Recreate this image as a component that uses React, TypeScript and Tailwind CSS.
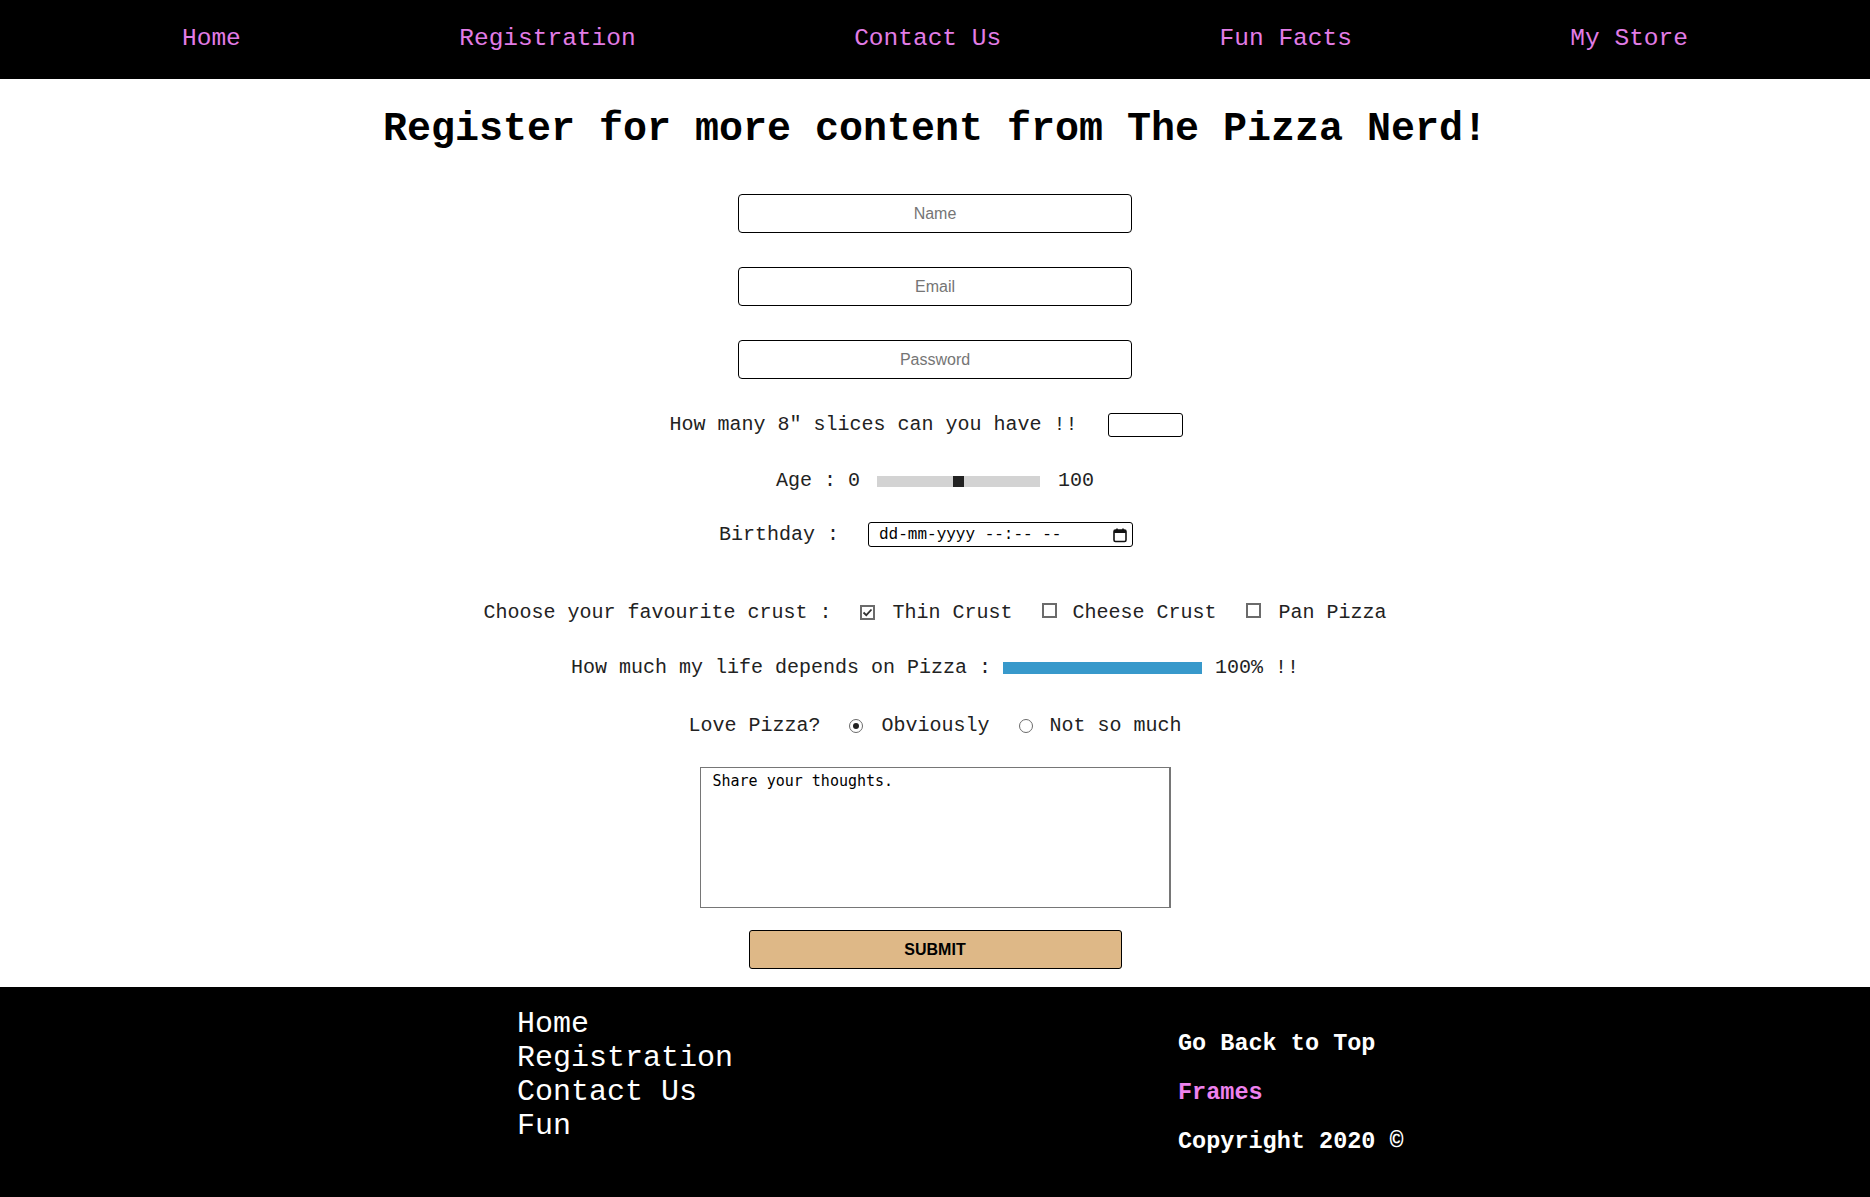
const mono = "font-['Liberation_Mono','Courier_New',monospace]";

const navLinks = ['Home', 'Registration', 'Contact Us', 'Fun Facts', 'My Store'];
const footerLinks = ['Home', 'Registration', 'Contact Us', 'Fun'];

function CheckBox({ checked }: { checked?: boolean }) {
  return (
    <span className="inline-flex h-[15px] w-[15px] items-center justify-center border-2 border-[#6b6b6b] bg-white">
      {checked && (
        <svg width="11" height="11" viewBox="0 0 11 11" fill="none">
          <path d="M1.5 5.5 L4.3 8.2 L9.5 2.5" stroke="#333" strokeWidth="1.8" />
        </svg>
      )}
    </span>
  );
}

function Radio({ checked }: { checked?: boolean }) {
  return (
    <span className="inline-flex h-[14px] w-[14px] items-center justify-center rounded-full border border-[#6b6b6b] bg-white">
      {checked && <span className="h-[6px] w-[6px] rounded-full bg-[#222]" />}
    </span>
  );
}

function TextField({ placeholder, type = 'text' }: { placeholder: string; type?: string }) {
  return (
    <input
      type={type}
      placeholder={placeholder}
      className="h-[39px] w-[394px] rounded-[4px] border border-black bg-white text-center font-['Liberation_Sans',Arial,sans-serif] text-[16px] text-black placeholder:text-[#757575] outline-none"
    />
  );
}

export default function App() {
  return (
    <div className={`min-h-[1197px] w-full bg-white ${mono}`}>
      <nav className="flex h-[79px] items-center justify-between bg-black px-[182px]">
        {navLinks.map((link) => (
          <a key={link} href="#" className="text-[24.5px] leading-none text-[#e27ce6]">
            {link}
          </a>
        ))}
      </nav>

      <main className="flex flex-col items-center text-[20px] text-[#222]">
        <h1 className="mt-[27px] text-[40px] font-bold leading-[48px] text-black">
          Register for more content from The Pizza Nerd!
        </h1>

        <div className="mt-[40px] flex flex-col items-center gap-[34px]">
          <TextField placeholder="Name" />
          <TextField placeholder="Email" type="email" />
          <TextField placeholder="Password" type="password" />
        </div>

        <div className="mt-[34px] flex h-[24px] items-center gap-[30px] pr-[18px]">
          <span>How many 8" slices can you have !!</span>
          <input type="number" className="h-[24px] w-[75px] rounded-[3px] border border-black outline-none" />
        </div>

        <div className="mt-[32px] flex h-[24px] items-center">
          <span>Age : 0</span>
          <div className="relative ml-[17px] flex h-[11px] w-[163px] items-center justify-center bg-[#d3d3d3]">
            <span className="h-[11px] w-[11px] bg-[#222]" />
          </div>
          <span className="ml-[18px]">100</span>
        </div>

        <div className="mt-[29px] flex h-[25px] items-center gap-[29px] pr-[18px]">
          <span>Birthday :</span>
          <div className="flex h-[25px] w-[265px] items-center justify-between rounded-[3px] border border-black pl-[10px] pr-[4px]">
            <span className="text-[16px] text-black">dd-mm-yyyy --:-- --</span>
            <svg width="16" height="16" viewBox="0 0 16 16" fill="none">
              <rect x="2" y="3" width="12" height="11.5" rx="1.5" stroke="#111" strokeWidth="1.6" />
              <rect x="2" y="3" width="12" height="3" fill="#111" />
              <path d="M5 1.5v2.5M11 1.5v2.5" stroke="#111" strokeWidth="1.6" />
            </svg>
          </div>
        </div>

        <div className="mt-[54px] flex h-[24px] items-center">
          <span>Choose your favourite crust :</span>
          <span className="ml-[29px]"><CheckBox checked /></span>
          <span className="ml-[17px]">Thin Crust</span>
          <span className="ml-[29px]"><CheckBox /></span>
          <span className="ml-[16px]">Cheese Crust</span>
          <span className="ml-[29px]"><CheckBox /></span>
          <span className="ml-[18px]">Pan Pizza</span>
        </div>

        <div className="mt-[31px] flex h-[24px] items-center">
          <span>How much my life depends on Pizza :</span>
          <div className="ml-[12px] h-[12px] w-[199px] bg-[#3899cb]" />
          <span className="ml-[13px]">100% !!</span>
        </div>

        <div className="mt-[34px] flex h-[24px] items-center">
          <span>Love Pizza?</span>
          <span className="ml-[29px] flex"><Radio checked /></span>
          <span className="ml-[18px]">Obviously</span>
          <span className="ml-[29px] flex"><Radio /></span>
          <span className="ml-[17px]">Not so much</span>
        </div>

        <textarea
          defaultValue="Share your thoughts."
          className="mt-[29px] h-[141px] w-[471px] resize-none border border-r-2 border-[#767676] px-[12px] py-[3px] font-['DejaVu_Sans_Mono',monospace] text-[15px] leading-[20px] text-black outline-none"
        />

        <button className="mt-[22px] mb-[18px] h-[39px] w-[373px] rounded-[3px] border border-black bg-[#deb887] font-['Liberation_Sans',Arial,sans-serif] text-[16px] font-bold text-black">
          SUBMIT
        </button>
      </main>

      <footer className="flex h-[210px] bg-black pl-[517px]">
        <ul className="w-[661px] pt-[20px]">
          {footerLinks.map((link) => (
            <li key={link} className="text-[30px] leading-[34px] text-white">
              <a href="#">{link}</a>
            </li>
          ))}
        </ul>
        <div className="flex flex-col gap-[21px] pt-[43px] text-[23.5px] font-bold leading-[28px]">
          <a href="#" className="text-white">Go Back to Top</a>
          <a href="#" className="text-[#ee82ee]">Frames</a>
          <span className="text-white">Copyright 2020 ©</span>
        </div>
      </footer>
    </div>
  );
}
